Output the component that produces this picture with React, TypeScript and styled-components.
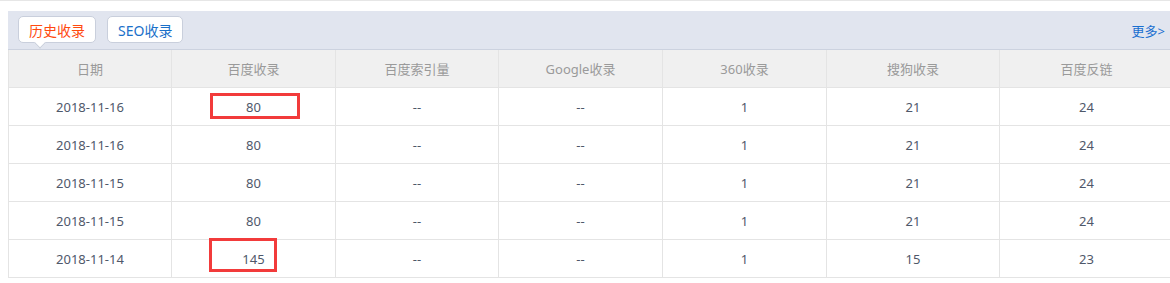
import styled, { createGlobalStyle } from 'styled-components'

const GlobalStyle = createGlobalStyle`
  html, body {
    margin: 0;
    padding: 0;
    background: #fff;
    overflow: hidden;
  }
  body {
    font-family: "Noto Sans", "Noto Sans CJK SC", sans-serif;
    font-size: 13px;
  }
`

const TopRule = styled.div`
  height: 1px;
  background: #e6e6e6;
`

const Panel = styled.section`
  width: 1165px;
  margin: 10px 0 0 8px;
  position: relative;
`

const TabBar = styled.div`
  display: flex;
  align-items: flex-start;
  height: 39px;
  padding: 5px 0 0 10px;
  box-sizing: border-box;
  background: #e1e5ef;
  border-bottom: 1px solid #ccd2df;
  position: relative;
`

const Tab = styled.div<{ $active?: boolean }>`
  position: relative;
  height: 27px;
  box-sizing: border-box;
  padding: 0 10px;
  margin-right: 11px;
  display: flex;
  align-items: center;
  background: #fff;
  border: 1px solid #c9cfdc;
  border-radius: 5px;
  font-size: 14px;
  color: ${p => (p.$active ? '#ff4a0f' : '#1a70c9')};

  &::after {
    content: '';
    display: ${p => (p.$active ? 'block' : 'none')};
    position: absolute;
    left: 17px;
    bottom: -5px;
    width: 7px;
    height: 7px;
    background: #fff;
    border-right: 1px solid #c9cfdc;
    border-bottom: 1px solid #c9cfdc;
    transform: rotate(45deg);
  }
`

const More = styled.a`
  position: absolute;
  right: 8px;
  top: 10px;
  font-size: 13px;
  color: #1a6fd0;
  text-decoration: none;
`

const Table = styled.table`
  width: 1165px;
  table-layout: fixed;
  border-collapse: collapse;
  border-left: 1px solid #e4e4e4;
`

const HeadCell = styled.th`
  height: 37px;
  padding: 0;
  background: #f0f0f0;
  color: #9a9a9a;
  font-weight: normal;
  font-size: 13px;
  text-align: center;
  border-right: 1px solid #e4e4e4;
  border-bottom: 1px solid #e4e4e4;
`

const Cell = styled.td`
  height: 37px;
  padding: 0;
  color: #4f586a;
  font-size: 13px;
  text-align: center;
  border-right: 1px solid #e4e4e4;
  border-bottom: 1px solid #e4e4e4;
`

const Mark = styled.div<{ $x: number; $y: number; $w: number; $h: number }>`
  position: absolute;
  left: ${p => p.$x}px;
  top: ${p => p.$y}px;
  width: ${p => p.$w}px;
  height: ${p => p.$h}px;
  box-sizing: border-box;
  border: 3px solid #f23b3b;
  pointer-events: none;
`

const columns = [
  { title: '日期', width: 163 },
  { title: '百度收录', width: 164 },
  { title: '百度索引量', width: 163 },
  { title: 'Google收录', width: 164 },
  { title: '360收录', width: 164 },
  { title: '搜狗收录', width: 173 },
  { title: '百度反链', width: 174 },
]

const rows = [
  ['2018-11-16', '80', '--', '--', '1', '21', '24'],
  ['2018-11-16', '80', '--', '--', '1', '21', '24'],
  ['2018-11-15', '80', '--', '--', '1', '21', '24'],
  ['2018-11-15', '80', '--', '--', '1', '21', '24'],
  ['2018-11-14', '145', '--', '--', '1', '15', '23'],
]

export default function App() {
  return (
    <>
      <GlobalStyle />
      <TopRule />
      <Panel>
        <TabBar>
          <Tab $active>历史收录</Tab>
          <Tab>SEO收录</Tab>
          <More href="#">更多&gt;</More>
        </TabBar>
        <Table>
          <colgroup>
            {columns.map(c => (
              <col key={c.title} style={{ width: c.width }} />
            ))}
          </colgroup>
          <thead>
            <tr>
              {columns.map(c => (
                <HeadCell key={c.title}>{c.title}</HeadCell>
              ))}
            </tr>
          </thead>
          <tbody>
            {rows.map((r, i) => (
              <tr key={i}>
                {r.map((v, j) => (
                  <Cell key={j}>{v}</Cell>
                ))}
              </tr>
            ))}
          </tbody>
        </Table>
        <Mark $x={202} $y={82} $w={90} $h={26} />
        <Mark $x={201} $y={227} $w={68} $h={34} />
      </Panel>
    </>
  )
}
